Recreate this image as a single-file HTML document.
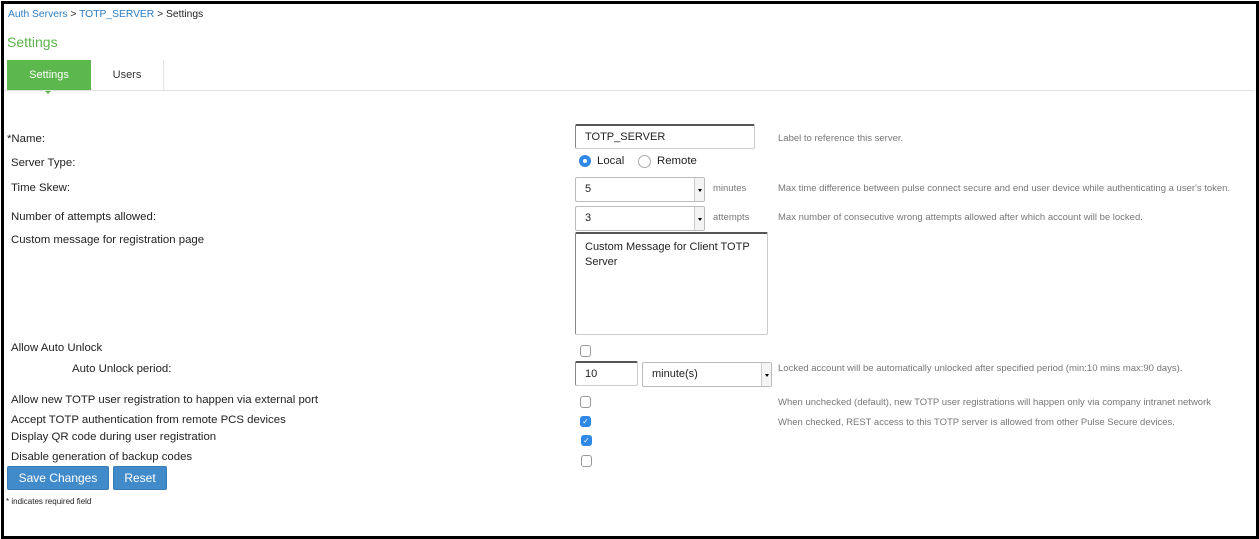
<!DOCTYPE html>
<html><head><style>
body{margin:0;width:1259px;height:539px;background:#fff;font-family:"Liberation Sans",sans-serif;position:relative;overflow:hidden;color:#222}
.frame{position:absolute;left:1px;top:1px;width:1252px;height:532px;border:3px solid #000}
.a{position:absolute;white-space:nowrap}
.l{font-size:11.4px;color:#222}
.h{font-size:9.5px;color:#777}
.inp{position:absolute;border:1px solid #ccc;border-top:2px solid #555;border-left:1px solid #888;border-radius:2px;font-size:11px;box-sizing:border-box;padding-left:9px;background:#fff}
.sel{position:absolute;border:1px solid #bbb;border-radius:2px;font-size:11px;box-sizing:border-box;padding-left:9px;background:#fff}
.sel:after{content:"";position:absolute;right:0;top:0;bottom:0;width:9px;border-left:1px solid #ccc;background:#f4f4f4}
.sel i{position:absolute;right:2px;top:50%;margin-top:-1px;border:2px solid transparent;border-top:3px solid #000;z-index:2}
.cb{position:absolute;width:9px;height:10px;border:1px solid #999;border-radius:3px;background:#fff}
.cbc{position:absolute;width:11px;height:11px;border-radius:3px;background:#2f87e6;color:#fff;font-size:8px;line-height:11px;text-align:center}
.btn{position:absolute;background:#428bca;border:1px solid #3a7bb3;border-radius:2px;color:#fff;font-size:12px;text-align:center;box-sizing:border-box}
</style></head><body>
<div class="frame"></div>
<div class="a" style="left:8px;top:9px;font-size:10.3px;color:#2b7dc5">Auth Servers <span style="color:#222">&gt;</span> TOTP_SERVER <span style="color:#222">&gt; Settings</span></div>
<div class="a" style="left:7px;top:34px;font-size:14px;color:#5bb449">Settings</div>
<div class="a" style="left:7px;top:60px;width:84px;height:30px;background:#5cb84c;color:#fff;font-size:11px;text-align:center;line-height:31px">Settings</div>
<div class="a" style="left:44px;top:90px;width:0;height:0;border:4px solid transparent;border-top:4px solid #5cb84c"></div>
<div class="a" style="left:91px;top:60px;width:72px;height:30px;color:#333;font-size:11px;text-align:center;line-height:31px;border-right:1px solid #e5e5e5">Users</div>
<div class="a" style="left:4px;top:90px;width:1250px;height:1px;background:#e0e0e0"></div>

<div class="a l" style="left:7px;top:133px">*Name:</div>
<div class="inp" style="left:575px;top:124px;width:180px;height:25px;line-height:23px">TOTP_SERVER</div>
<div class="a h" style="left:778px;top:133px">Label to reference this server.</div>

<div class="a l" style="left:11px;top:157px">Server Type:</div>
<div class="a" style="left:579px;top:155px;width:12px;height:12px;border-radius:50%;background:#2f87e6"><div style="position:absolute;left:4px;top:4px;width:4px;height:4px;border-radius:50%;background:#fff"></div></div>
<div class="a l" style="left:597px;top:155px">Local</div>
<div class="a" style="left:638px;top:155px;width:11px;height:11px;border-radius:50%;border:1px solid #aaa"></div>
<div class="a l" style="left:657px;top:155px">Remote</div>

<div class="a l" style="left:11px;top:182px">Time Skew:</div>
<div class="sel" style="left:575px;top:177px;width:130px;height:25px;line-height:23px">5<i></i></div>
<div class="a h" style="left:713px;top:183px">minutes</div>
<div class="a h" style="left:778px;top:183px">Max time difference between pulse connect secure and end user device while authenticating a user's token.</div>

<div class="a l" style="left:11px;top:211px">Number of attempts allowed:</div>
<div class="sel" style="left:575px;top:206px;width:130px;height:25px;line-height:23px">3<i></i></div>
<div class="a h" style="left:713px;top:212px">attempts</div>
<div class="a h" style="left:778px;top:212px">Max number of consecutive wrong attempts allowed after which account will be locked.</div>

<div class="a l" style="left:11px;top:234px">Custom message for registration page</div>
<div class="inp" style="left:575px;top:232px;width:193px;height:103px;padding-top:6px;line-height:15px;white-space:normal">Custom Message for Client TOTP Server</div>

<div class="a l" style="left:11px;top:342px">Allow Auto Unlock</div>
<div class="cb" style="left:580px;top:345px"></div>
<div class="a l" style="left:72px;top:363px">Auto Unlock period:</div>
<div class="inp" style="left:575px;top:361px;width:63px;height:25px;line-height:23px">10</div>
<div class="sel" style="left:642px;top:362px;width:130px;height:25px;line-height:23px">minute(s)<i></i></div>
<div class="a h" style="left:778px;top:363px">Locked account will be automatically unlocked after specified period (min:10 mins max:90 days).</div>

<div class="a l" style="left:11px;top:394px">Allow new TOTP user registration to happen via external port</div>
<div class="cb" style="left:580px;top:396px"></div>
<div class="a h" style="left:778px;top:397px">When unchecked (default), new TOTP user registrations will happen only via company intranet network</div>

<div class="a l" style="left:11px;top:414px">Accept TOTP authentication from remote PCS devices</div>
<div class="cbc" style="left:580px;top:416px">✓</div>
<div class="a h" style="left:778px;top:417px">When checked, REST access to this TOTP server is allowed from other Pulse Secure devices.</div>

<div class="a l" style="left:11px;top:431px">Display QR code during user registration</div>
<div class="cbc" style="left:581px;top:435px">✓</div>

<div class="a l" style="left:11px;top:451px">Disable generation of backup codes</div>
<div class="cb" style="left:581px;top:455px"></div>

<div class="btn" style="left:7px;top:466px;width:102px;height:24px;line-height:22px">Save Changes</div>
<div class="btn" style="left:113px;top:466px;width:54px;height:24px;line-height:22px">Reset</div>
<div class="a" style="left:6px;top:497px;font-size:8px;color:#222">* indicates required field</div>
</body></html>
